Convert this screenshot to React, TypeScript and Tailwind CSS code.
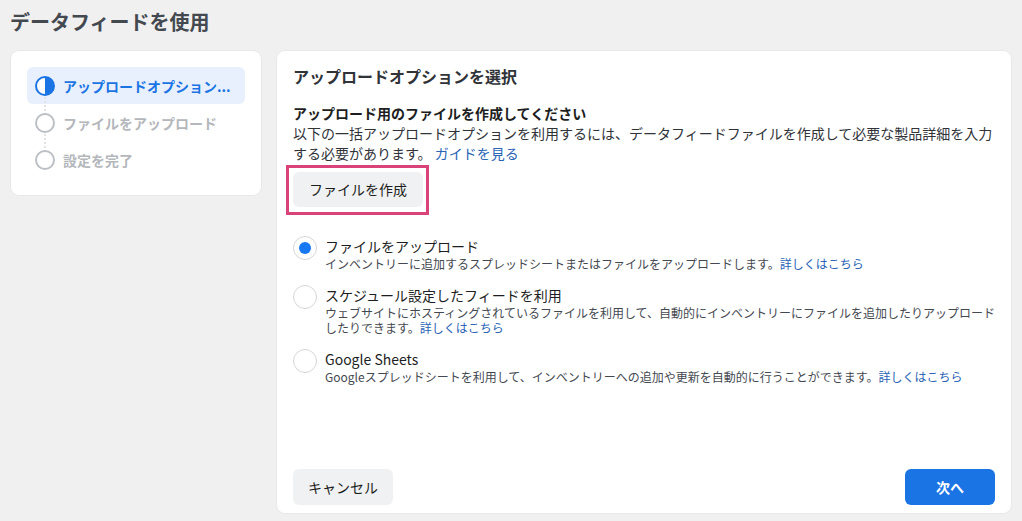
import React from "react";

const font = "font-['Noto_Sans_CJK_JP','Noto_Sans',sans-serif]";

function StepCircle({ state }: { state: "active" | "todo" }) {
  if (state === "active") {
    return (
      <svg width="20" height="20" viewBox="0 0 20 20" className="shrink-0">
        <circle cx="10" cy="10" r="9" fill="white" stroke="#1b74e4" strokeWidth="2" />
        <path d="M10 1 A9 9 0 0 1 10 19 Z" fill="#1b74e4" />
      </svg>
    );
  }
  return (
    <svg width="20" height="20" viewBox="0 0 20 20" className="shrink-0">
      <circle cx="10" cy="10" r="9" fill="white" stroke="#bcc0c4" strokeWidth="2" />
    </svg>
  );
}

function Step({ label, state, connector }: { label: string; state: "active" | "todo"; connector: boolean }) {
  return (
    <div
      className={`relative flex h-[37px] items-center gap-[8px] rounded-[6px] pl-[8px] ${
        state === "active" ? "bg-[#e7f0fc]" : ""
      }`}
    >
      {connector && (
        <div className="absolute left-[17px] top-[30px] h-[14px] border-l-2 border-dotted border-[#e1e3e6]" />
      )}
      <StepCircle state={state} />
      <span
        className={`whitespace-nowrap text-[14px] font-bold leading-[18px] ${
          state === "active" ? "text-[#1b74e4]" : "text-[#b4b7bb]"
        }`}
      >
        {label}
      </span>
    </div>
  );
}

function Radio({ checked }: { checked: boolean }) {
  return (
    <div className="flex h-[24px] w-[24px] shrink-0 items-center justify-center rounded-full border border-[#d4d6d9] bg-white">
      {checked && <div className="h-[12px] w-[12px] rounded-full bg-[#1877f2]" />}
    </div>
  );
}

function Option({
  checked,
  title,
  desc,
}: {
  checked: boolean;
  title: string;
  desc: string;
}) {
  return (
    <div className="flex gap-[8px]">
      <Radio checked={checked} />
      <div className="-mr-[10px] flex flex-1 flex-col">
        <div className="text-[14px] leading-[20px] text-[#1c1e21]">{title}</div>
        <div className="text-[12px] leading-[15px] text-[#444950]">
          {desc}
          <span className="text-[#2a64b4]">詳しくはこちら</span>
        </div>
      </div>
    </div>
  );
}

export default function App() {
  return (
    <div className={`min-h-[521px] w-full bg-[#f0f0f0] px-[11px] ${font}`}>
      <h1 className="-ml-[1px] h-[44px] text-[20px] font-bold leading-[44px] text-[#444950]">
        データフィードを使用
      </h1>
      <div className="mt-[7px] flex gap-[16px]">
        <div className="h-[144px] w-[250px] shrink-0 rounded-[8px] bg-white p-[16px] shadow-[0_0_0_1px_rgba(0,0,0,0.03)]">
          <Step label="アップロードオプション..." state="active" connector />
          <Step label="ファイルをアップロード" state="todo" connector />
          <Step label="設定を完了" state="todo" connector={false} />
        </div>
        <div className="flex h-[462px] flex-1 flex-col rounded-[8px] bg-white px-[16px] pb-[8px] pt-[16px] shadow-[0_0_0_1px_rgba(0,0,0,0.03)]">
          <h2 className="text-[16px] font-bold leading-[18px] text-[#303338]">
            アップロードオプションを選択
          </h2>
          <div className="mt-[18px] text-[14px] font-bold leading-[20px] text-[#1c1e21]">
            アップロード用のファイルを作成してください
          </div>
          <p className="text-[14px] leading-[20px] text-[#303338]">
            以下の一括アップロードオプションを利用するには、データフィードファイルを作成して必要な製品詳細を入力する必要があります。{" "}
            <span className="text-[#2a64b4]">ガイドを見る</span>
          </p>
          <div className="-ml-[7px] mt-[2px] w-[143px] border-[3px] border-[#d9437a] pb-[5px] pl-[4px] pt-[4px]">
            <button className="h-[35px] w-[130px] rounded-[6px] bg-[#f0f1f2] text-[14px] text-[#1c1e21]">
              ファイルを作成
            </button>
          </div>
          <div className="mt-[21px] flex flex-col gap-[14px]">
            <Option
              checked
              title="ファイルをアップロード"
              desc="インベントリーに追加するスプレッドシートまたはファイルをアップロードします。"
            />
            <Option
              checked={false}
              title="スケジュール設定したフィードを利用"
              desc="ウェブサイトにホスティングされているファイルを利用して、自動的にインベントリーにファイルを追加したりアップロードしたりできます。"
            />
            <Option
              checked={false}
              title="Google Sheets"
              desc="Googleスプレッドシートを利用して、インベントリーへの追加や更新を自動的に行うことができます。"
            />
          </div>
          <div className="mt-auto flex items-center justify-between">
            <button className="h-[36px] w-[100px] rounded-[6px] bg-[#f0f1f2] text-[14px] text-[#1c1e21]">
              キャンセル
            </button>
            <button className="h-[36px] w-[90px] rounded-[6px] bg-[#1b74e4] text-[14px] font-bold text-white">
              次へ
            </button>
          </div>
        </div>
      </div>
    </div>
  );
}
